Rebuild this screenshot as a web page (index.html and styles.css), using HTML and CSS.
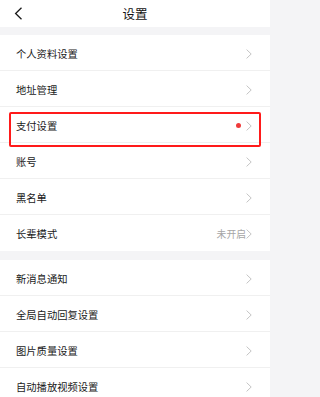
FILE: index.html
```html
<!DOCTYPE html>
<html lang="zh">
<head>
<meta charset="utf-8">
<link rel="stylesheet" href="styles.css">
</head>
<body>
<div class="page">
  <header class="topbar">
    <svg class="back" width="9" height="13" viewBox="0 0 9 13"><path d="M7.5 0.8 L1.6 6.5 L7.5 12.2" fill="none" stroke="#1a1a1a" stroke-width="1.3"/></svg>
    <div class="title">设置</div>
  </header>
  <section class="group">
    <div class="row"><span class="label">个人资料设置</span><span class="right"><svg class="chev" width="6" height="10" viewBox="0 0 6 10"><path d="M0.6 0.6 L5.2 5 L0.6 9.4" fill="none" stroke="#bdbdbd" stroke-width="0.9"/></svg></span></div>
    <div class="row"><span class="label">地址管理</span><span class="right"><svg class="chev" width="6" height="10" viewBox="0 0 6 10"><path d="M0.6 0.6 L5.2 5 L0.6 9.4" fill="none" stroke="#bdbdbd" stroke-width="0.9"/></svg></span></div>
    <div class="row highlighted"><span class="label">支付设置</span><span class="right"><span class="dot"></span><svg class="chev" width="6" height="10" viewBox="0 0 6 10"><path d="M0.6 0.6 L5.2 5 L0.6 9.4" fill="none" stroke="#bdbdbd" stroke-width="0.9"/></svg></span><div class="mark"></div></div>
    <div class="row"><span class="label">账号</span><span class="right"><svg class="chev" width="6" height="10" viewBox="0 0 6 10"><path d="M0.6 0.6 L5.2 5 L0.6 9.4" fill="none" stroke="#bdbdbd" stroke-width="0.9"/></svg></span></div>
    <div class="row"><span class="label">黑名单</span><span class="right"><svg class="chev" width="6" height="10" viewBox="0 0 6 10"><path d="M0.6 0.6 L5.2 5 L0.6 9.4" fill="none" stroke="#bdbdbd" stroke-width="0.9"/></svg></span></div>
    <div class="row"><span class="label">长辈模式</span><span class="right"><span class="status">未开启</span><svg class="chev tight" width="6" height="10" viewBox="0 0 6 10"><path d="M0.6 0.6 L5.2 5 L0.6 9.4" fill="none" stroke="#bdbdbd" stroke-width="0.9"/></svg></span></div>
  </section>
  <section class="group">
    <div class="row"><span class="label">新消息通知</span><span class="right"><svg class="chev" width="6" height="10" viewBox="0 0 6 10"><path d="M0.6 0.6 L5.2 5 L0.6 9.4" fill="none" stroke="#bdbdbd" stroke-width="0.9"/></svg></span></div>
    <div class="row"><span class="label">全局自动回复设置</span><span class="right"><svg class="chev" width="6" height="10" viewBox="0 0 6 10"><path d="M0.6 0.6 L5.2 5 L0.6 9.4" fill="none" stroke="#bdbdbd" stroke-width="0.9"/></svg></span></div>
    <div class="row"><span class="label">图片质量设置</span><span class="right"><svg class="chev" width="6" height="10" viewBox="0 0 6 10"><path d="M0.6 0.6 L5.2 5 L0.6 9.4" fill="none" stroke="#bdbdbd" stroke-width="0.9"/></svg></span></div>
    <div class="row"><span class="label">自动播放视频设置</span><span class="right"><svg class="chev" width="6" height="10" viewBox="0 0 6 10"><path d="M0.6 0.6 L5.2 5 L0.6 9.4" fill="none" stroke="#bdbdbd" stroke-width="0.9"/></svg></span></div>
  </section>
</div>
</body>
</html>
```
FILE: styles.css
```css
html, body {
  margin: 0;
  padding: 0;
  background: #f4f4f6;
}
body {
  font-family: "Noto Sans CJK SC", "Noto Sans", sans-serif;
  color: #1a1a1a;
  overflow: hidden;
}
.page {
  width: 270px;
  display: flex;
  flex-direction: column;
  gap: 8px;
}
.topbar {
  height: 27px;
  background: #fff;
  position: relative;
  display: flex;
  align-items: center;
  justify-content: center;
}
.back {
  position: absolute;
  left: 14px;
  top: 7px;
}
.title {
  font-size: 12.5px;
  line-height: 27px;
  color: #111;
}
.group {
  background: #fff;
  display: flex;
  flex-direction: column;
}
.group + .group {
  margin-top: 1px;
}
.row {
  height: 36px;
  box-sizing: border-box;
  border-bottom: 1px solid #f0f0f0;
  display: flex;
  align-items: center;
  justify-content: space-between;
  padding: 0 18px 0 16px;
  position: relative;
}
.row:last-child {
  border-bottom: none;
}
.label {
  font-size: 10.3px;
  line-height: 14px;
  color: #1a1a1a;
  padding-top: 2px;
}
.right {
  display: flex;
  align-items: center;
  gap: 5px;
  padding-top: 2px;
}
.chev {
  display: block;
}
.status {
  font-size: 9.8px;
  color: #a6a6a6;
  line-height: 14px;
}
.right .tight {
  margin-left: -5px;
}
.dot {
  width: 5px;
  height: 5px;
  border-radius: 50%;
  background: #ef3b3b;
}
.mark {
  position: absolute;
  left: 9px;
  right: 9px;
  top: 5px;
  height: 35px;
  box-sizing: border-box;
  border: 2px solid #ff1a1a;
  border-radius: 2px;
}
```
